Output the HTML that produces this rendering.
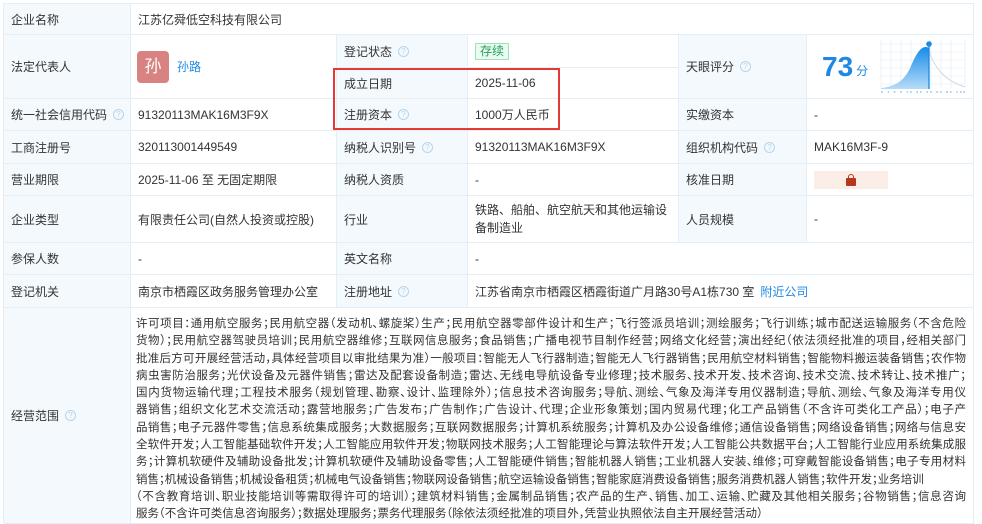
<!DOCTYPE html>
<html><head><meta charset="utf-8"><style>
*{margin:0;padding:0;box-sizing:border-box}
body{width:982px;height:523px;background:#fff;font-family:"Liberation Sans","Noto Sans CJK SC",sans-serif;font-size:12px;color:#333;position:relative;overflow:hidden}
.c{position:absolute;border-right:1px solid #e4eef6;border-bottom:1px solid #e4eef6;display:flex;align-items:center;padding-left:7px;white-space:nowrap}
.l{background:#f3f9fd;color:#333}
.q{display:inline-block;width:11px;height:11px;border:1px solid #b8d4ea;border-radius:50%;color:#b8d4ea;font-size:8px;line-height:9px;text-align:center;margin-left:6px}
.scope{position:absolute;left:136px;top:316px;width:830px;font-size:11.5px;line-height:17.3px;font-feature-settings:"halt";color:#333}
.scope div{white-space:nowrap;text-align:justify;text-align-last:justify;overflow:hidden;height:17.3px}
</style></head><body>
<div style="position:absolute;left:3px;top:3px;width:971px;height:1px;background:#e4eef6"></div>
<div style="position:absolute;left:3px;top:3px;width:1px;height:520px;background:#e4eef6"></div>

<div class="c l" style="left:4px;top:4px;width:127px;height:31px">企业名称</div>
<div class="c" style="left:131px;top:4px;width:843px;height:31px">江苏亿舜低空科技有限公司</div>

<div class="c l" style="left:4px;top:35px;width:127px;height:64px">法定代表人</div>
<div class="c" style="left:131px;top:35px;width:206px;height:64px;padding-left:6px"><span style="display:inline-block;width:32px;height:32px;background:#d88282;border-radius:4px;color:#fff;font-size:17px;text-align:center;line-height:32px">孙</span><span style="color:#1e88e5;margin-left:8px">孙路</span></div>
<div class="c l" style="left:337px;top:35px;width:131px;height:33px">登记状态<span class="q">?</span></div>
<div class="c" style="left:468px;top:35px;width:211px;height:33px"><span style="border:1px solid #9fe0bc;background:#eafaf1;color:#22a35a;padding:1px 4px;line-height:13px">存续</span></div>
<div class="c l" style="left:337px;top:68px;width:131px;height:31px">成立日期</div>
<div class="c" style="left:468px;top:68px;width:211px;height:31px">2025-11-06</div>
<div class="c l" style="left:679px;top:35px;width:128px;height:64px">天眼评分<span class="q">?</span></div>
<div class="c" style="left:807px;top:35px;width:167px;height:64px;padding-left:15px"><span style="color:#1e88e5;font-size:28px;font-weight:bold">73</span><span style="color:#1e88e5;font-size:12px;margin:8px 0 0 3px">分</span>
<svg style="position:absolute;left:72px;top:5px" width="90" height="54" viewBox="0 0 90 54">
<defs><linearGradient id="g" x1="0" y1="0" x2="0" y2="1"><stop offset="0" stop-color="#168be8"/><stop offset="1" stop-color="#b7dcf8"/></linearGradient></defs>
<g stroke="#e3ecf5" stroke-width="0.6"><path d="M2 4H86M2 12H86M2 20H86M2 28H86M2 36H86M2 44H86M2 0V48M12 0V48M22 0V48M32 0V48M42 0V48M52 0V48M62 0V48M72 0V48M86 0V48"/></g>
<path d="M2 48C18 46 26 40 32 26C38 12 42 7 47 7C50 7 50 9 50 11L50 49L2 49Z" fill="url(#g)"/>
<path d="M50 11C55 26 64 40 86 47" stroke="#cfdbe6" stroke-width="1" fill="none"/>
<line x1="50" y1="4" x2="50" y2="49" stroke="#1e88e5" stroke-width="1.3"/>
<circle cx="50" cy="4" r="2.8" fill="#1e88e5"/>
<text x="2" y="53" font-size="3" fill="#1e88e5" font-family="Liberation Sans" textLength="84">0 1 3 5 10 20 40 60 80 100</text>
</svg></div>

<div class="c l" style="left:4px;top:99px;width:127px;height:32px">统一社会信用代码<span class="q">?</span></div>
<div class="c" style="left:131px;top:99px;width:206px;height:32px">91320113MAK16M3F9X</div>
<div class="c l" style="left:337px;top:99px;width:131px;height:32px">注册资本<span class="q">?</span></div>
<div class="c" style="left:468px;top:99px;width:211px;height:32px">1000万人民币</div>
<div class="c l" style="left:679px;top:99px;width:128px;height:32px">实缴资本</div>
<div class="c" style="left:807px;top:99px;width:167px;height:32px">-</div>

<div class="c l" style="left:4px;top:131px;width:127px;height:33px">工商注册号</div>
<div class="c" style="left:131px;top:131px;width:206px;height:33px">320113001449549</div>
<div class="c l" style="left:337px;top:131px;width:131px;height:33px">纳税人识别号<span class="q">?</span></div>
<div class="c" style="left:468px;top:131px;width:211px;height:33px">91320113MAK16M3F9X</div>
<div class="c l" style="left:679px;top:131px;width:128px;height:33px">组织机构代码<span class="q">?</span></div>
<div class="c" style="left:807px;top:131px;width:167px;height:33px">MAK16M3F-9</div>

<div class="c l" style="left:4px;top:164px;width:127px;height:32px">营业期限</div>
<div class="c" style="left:131px;top:164px;width:206px;height:32px">2025-11-06 至 无固定期限</div>
<div class="c l" style="left:337px;top:164px;width:131px;height:32px">纳税人资质</div>
<div class="c" style="left:468px;top:164px;width:211px;height:32px">-</div>
<div class="c l" style="left:679px;top:164px;width:128px;height:32px">核准日期</div>
<div class="c" style="left:807px;top:164px;width:167px;height:32px"><span style="display:inline-block;width:74px;height:18px;background:#fbeee6;position:relative"><span style="position:absolute;left:32px;top:7px;width:10px;height:8px;background:#b5371d;border-radius:1px"></span><span style="position:absolute;left:34px;top:3px;width:6px;height:6px;border:1.5px solid #b5371d;border-radius:3px 3px 0 0;border-bottom:none"></span></span></div>

<div class="c l" style="left:4px;top:196px;width:127px;height:47px">企业类型</div>
<div class="c" style="left:131px;top:196px;width:206px;height:47px">有限责任公司(自然人投资或控股)</div>
<div class="c l" style="left:337px;top:196px;width:131px;height:47px">行业</div>
<div class="c" style="left:468px;top:196px;width:211px;height:47px;white-space:normal;line-height:18px;padding-right:8px">铁路、船舶、航空航天和其他运输设备制造业</div>
<div class="c l" style="left:679px;top:196px;width:128px;height:47px">人员规模</div>
<div class="c" style="left:807px;top:196px;width:167px;height:47px">-</div>

<div class="c l" style="left:4px;top:243px;width:127px;height:32px">参保人数</div>
<div class="c" style="left:131px;top:243px;width:206px;height:32px">-</div>
<div class="c l" style="left:337px;top:243px;width:131px;height:32px">英文名称</div>
<div class="c" style="left:468px;top:243px;width:506px;height:32px">-</div>

<div class="c l" style="left:4px;top:275px;width:127px;height:33px">登记机关</div>
<div class="c" style="left:131px;top:275px;width:206px;height:33px">南京市栖霞区政务服务管理办公室</div>
<div class="c l" style="left:337px;top:275px;width:131px;height:33px">注册地址<span class="q">?</span></div>
<div class="c" style="left:468px;top:275px;width:506px;height:33px">江苏省南京市栖霞区栖霞街道广月路30号A1栋730 室<span style="color:#1e88e5;margin-left:6px">附近公司</span></div>

<div class="c l" style="left:4px;top:308px;width:127px;height:216px">经营范围<span class="q">?</span></div>
<div class="c" style="left:131px;top:308px;width:843px;height:216px"></div>
<div class="scope">
<div>许可项目：通用航空服务；民用航空器（发动机、螺旋桨）生产；民用航空器零部件设计和生产；飞行签派员培训；测绘服务；飞行训练；城市配送运输服务（不含危险</div>
<div>货物）；民用航空器驾驶员培训；民用航空器维修；互联网信息服务；食品销售；广播电视节目制作经营；网络文化经营；演出经纪（依法须经批准的项目，经相关部门</div>
<div>批准后方可开展经营活动，具体经营项目以审批结果为准）一般项目：智能无人飞行器制造；智能无人飞行器销售；民用航空材料销售；智能物料搬运装备销售；农作物</div>
<div>病虫害防治服务；光伏设备及元器件销售；雷达及配套设备制造；雷达、无线电导航设备专业修理；技术服务、技术开发、技术咨询、技术交流、技术转让、技术推广；</div>
<div>国内货物运输代理；工程技术服务（规划管理、勘察、设计、监理除外）；信息技术咨询服务；导航、测绘、气象及海洋专用仪器制造；导航、测绘、气象及海洋专用仪</div>
<div>器销售；组织文化艺术交流活动；露营地服务；广告发布；广告制作；广告设计、代理；企业形象策划；国内贸易代理；化工产品销售（不含许可类化工产品）；电子产</div>
<div>品销售；电子元器件零售；信息系统集成服务；大数据服务；互联网数据服务；计算机系统服务；计算机及办公设备维修；通信设备销售；网络设备销售；网络与信息安</div>
<div>全软件开发；人工智能基础软件开发；人工智能应用软件开发；物联网技术服务；人工智能理论与算法软件开发；人工智能公共数据平台；人工智能行业应用系统集成服</div>
<div>务；计算机软硬件及辅助设备批发；计算机软硬件及辅助设备零售；人工智能硬件销售；智能机器人销售；工业机器人安装、维修；可穿戴智能设备销售；电子专用材料</div>
<div style="text-align-last:left">销售；机械设备销售；机械设备租赁；机械电气设备销售；物联网设备销售；航空运输设备销售；智能家庭消费设备销售；服务消费机器人销售；软件开发；业务培训</div>
<div>（不含教育培训、职业技能培训等需取得许可的培训）；建筑材料销售；金属制品销售；农产品的生产、销售、加工、运输、贮藏及其他相关服务；谷物销售；信息咨询</div>
<div style="text-align-last:left">服务（不含许可类信息咨询服务）；数据处理服务；票务代理服务（除依法须经批准的项目外，凭营业执照依法自主开展经营活动）</div>
</div>

<div style="position:absolute;left:333px;top:68px;width:227px;height:62px;border:2px solid #e53935"></div>
</body></html>
